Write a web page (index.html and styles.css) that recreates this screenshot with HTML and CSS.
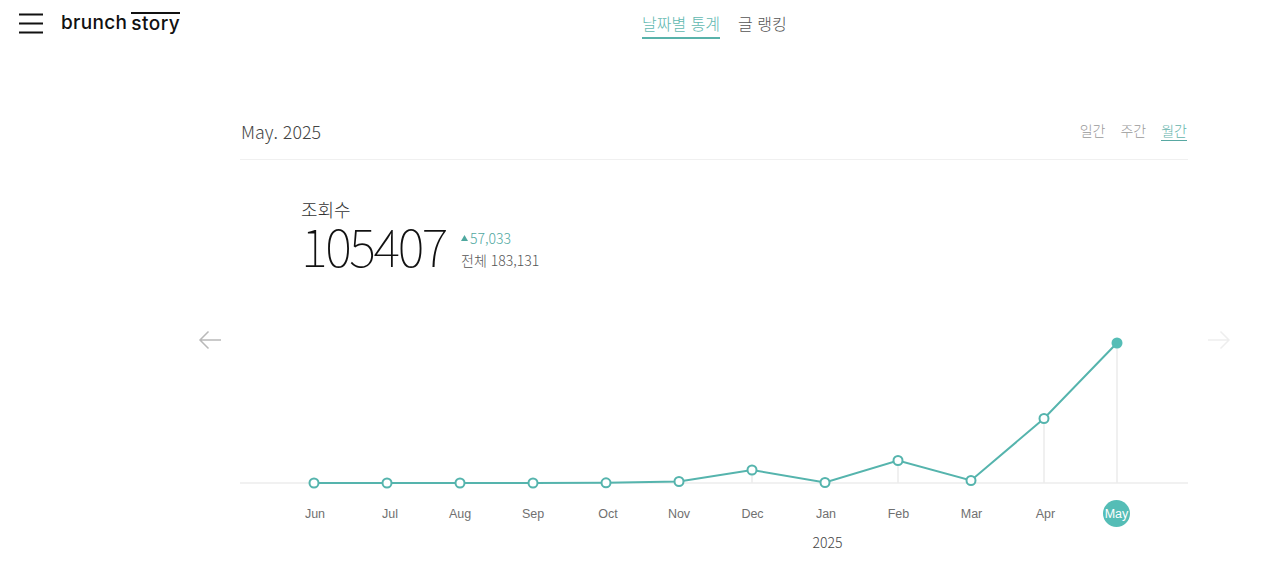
FILE: index.html
```html
<!DOCTYPE html>
<html lang="ko">
<head>
<meta charset="utf-8">
<title>brunchstory 통계</title>
<link rel="stylesheet" href="styles.css">
</head>
<body>
<header class="top">
  <div class="brand">
    <svg class="burger" width="26" height="22" viewBox="0 0 26 22"><path d="M1 2.500h24M1 11.500h24M1 20.500h24" stroke="#111" stroke-width="2" fill="none"/></svg>
    <div class="logo"><span>brunch</span><span class="logo-story">story</span></div>
  </div>
  <nav class="tabs">
    <a class="tab tab-on">날짜별 통계</a>
    <a class="tab">글 랭킹</a>
  </nav>
</header>
<main class="panel">
  <div class="head">
    <div class="date">May. 2025</div>
    <div class="modes">
      <a class="mode">일간</a>
      <a class="mode">주간</a>
      <a class="mode mode-on">월간</a>
    </div>
  </div>
  <section class="stat">
    <div class="stat-label">조회수</div>
    <div class="stat-row">
      <div class="stat-num">105407</div>
      <div class="stat-side">
        <div class="stat-delta"><svg class="tri" width="7" height="6" viewBox="0 0 7 6"><path d="M3.500 0 7 6H0z" fill="#4fa89f"/></svg>57,033</div>
        <div class="stat-total">전체 183,131</div>
      </div>
    </div>
  </section>
</main>
<svg class="chart" width="1280" height="290" viewBox="0 290 1280 290">
  <g class="arrow-prev"><path d="M221 340H200M208.500 331.500 200 340l8.500 8.500"/></g>
  <g class="arrow-next"><path d="M1208 340H1229M1220.500 331.500 1229 340l-8.500 8.500"/></g>
  <path class="axis" d="M240 483H1188"/>
  <path class="drop" d="M752 470V483M898 460.500V483M971 480.500V483M1044 418.500V483M1117 343V483"/>
  <polyline class="line" points="314,483 387,483 460,483 533,483 606,482.800 679,481.500 752,470 825,482.500 898,460.500 971,480.500 1044,418.500 1117,343"/>
  <g class="dots">
    <circle cx="314" cy="483" r="4.500"/><circle cx="387" cy="483" r="4.500"/><circle cx="460" cy="483" r="4.500"/>
    <circle cx="533" cy="483" r="4.500"/><circle cx="606" cy="482.800" r="4.500"/><circle cx="679" cy="481.500" r="4.500"/>
    <circle cx="752" cy="470" r="4.500"/><circle cx="825" cy="482.500" r="4.500"/><circle cx="898" cy="460.500" r="4.500"/>
    <circle cx="971" cy="480.500" r="4.500"/><circle cx="1044" cy="418.500" r="4.500"/>
  </g>
  <circle class="dot-on" cx="1117" cy="343" r="5.500"/>
  <circle class="dot-on" cx="1116.500" cy="513.500" r="13.500"/>
  <g class="months">
    <text x="315" y="518">Jun</text><text x="390" y="518">Jul</text><text x="460" y="518">Aug</text>
    <text x="533" y="518">Sep</text><text x="608" y="518">Oct</text><text x="679" y="518">Nov</text>
    <text x="752.500" y="518">Dec</text><text x="826" y="518">Jan</text><text x="898.500" y="518">Feb</text>
    <text x="971.500" y="518">Mar</text><text x="1045.500" y="518">Apr</text>
    <text class="month-on" x="1116.500" y="518">May</text>
  </g>
  <text class="year" x="827.500" y="548">2025</text>
</svg>
</body>
</html>
```
FILE: styles.css
```css
* { box-sizing: border-box; }
html, body { margin: 0; height: 580px; overflow: hidden; background: #fff; }
body {
  position: relative;
  font-family: "Noto Sans CJK KR", "Noto Sans", sans-serif;
  font-weight: 300;
  color: #333;
}
.top {
  display: flex;
  align-items: flex-start;
  height: 46px;
  padding-left: 18px;
}
.brand { display: flex; align-items: flex-start; gap: 17px; width: 624px; padding-top: 12px; }
.burger { display: block; }
.logo {
  display: flex;
  font-family: Inter, "Noto Sans", sans-serif;
  font-size: 19px;
  font-weight: 500;
  line-height: 22px;
  color: #111;
  letter-spacing: 0.300px;
}
.logo-story { border-top: 2px solid #111; margin-left: 4px; line-height: 20px; letter-spacing: 0.500px; }
.tabs { display: flex; gap: 18px; padding-top: 12px; font-size: 16px; }
.tab { height: 27px; line-height: 23px; color: #555; }
.tab-on { color: #61b8b0; border-bottom: 2px solid #58b2aa; }
.panel { width: 948px; margin-left: 240px; padding-top: 66px; }
.head {
  display: flex;
  justify-content: space-between;
  align-items: flex-start;
  height: 48px;
  border-bottom: 1px solid #f0f0f0;
}
.date { font-size: 17.800px; line-height: 38px; color: #444; padding-left: 1px; }
.modes { display: flex; gap: 15px; padding: 8px 1px 0 0; font-size: 14px; }
.mode { height: 21px; line-height: 20px; color: #999; }
.mode-on { color: #63b3ab; border-bottom: 1px solid #58a8a2; }
.stat { padding: 36px 0 0 61px; }
.stat-label { font-size: 18px; line-height: 26px; color: #333; }
.stat-row { display: flex; gap: 15px; }
.stat-num {
  font-size: 51px;
  line-height: 46px;
  letter-spacing: -2.400px;
  font-weight: 100;
  color: #111;
}
.stat-side { padding-top: 6px; }
.stat-delta { font-size: 14px; line-height: 20px; color: #4fa89f; display: flex; align-items: center; gap: 2px; }
.tri { display: block; }
.stat-total { font-size: 14px; line-height: 24px; color: #555; }
.chart { position: absolute; left: 0; top: 290px; display: block; }
.arrow-prev path, .arrow-next path { fill: none; stroke-width: 1.500; }
.arrow-prev path { stroke: #b9b9b9; }
.arrow-next path { stroke: #eeeeee; }
.axis, .drop { fill: none; stroke: #ececec; stroke-width: 1.500; }
.line { fill: none; stroke: #55b4ad; stroke-width: 2; }
.dots circle { fill: #fff; stroke: #55b4ad; stroke-width: 2; }
.dot-on { fill: #55bdb6; }
.months text {
  font-family: "Liberation Sans", Arial, sans-serif;
  font-size: 12.500px;
  font-weight: 400;
  fill: #707070;
  text-anchor: middle;
}
.months .month-on { fill: #fff; }
.year { font-size: 14px; fill: #444; text-anchor: middle; }
```
